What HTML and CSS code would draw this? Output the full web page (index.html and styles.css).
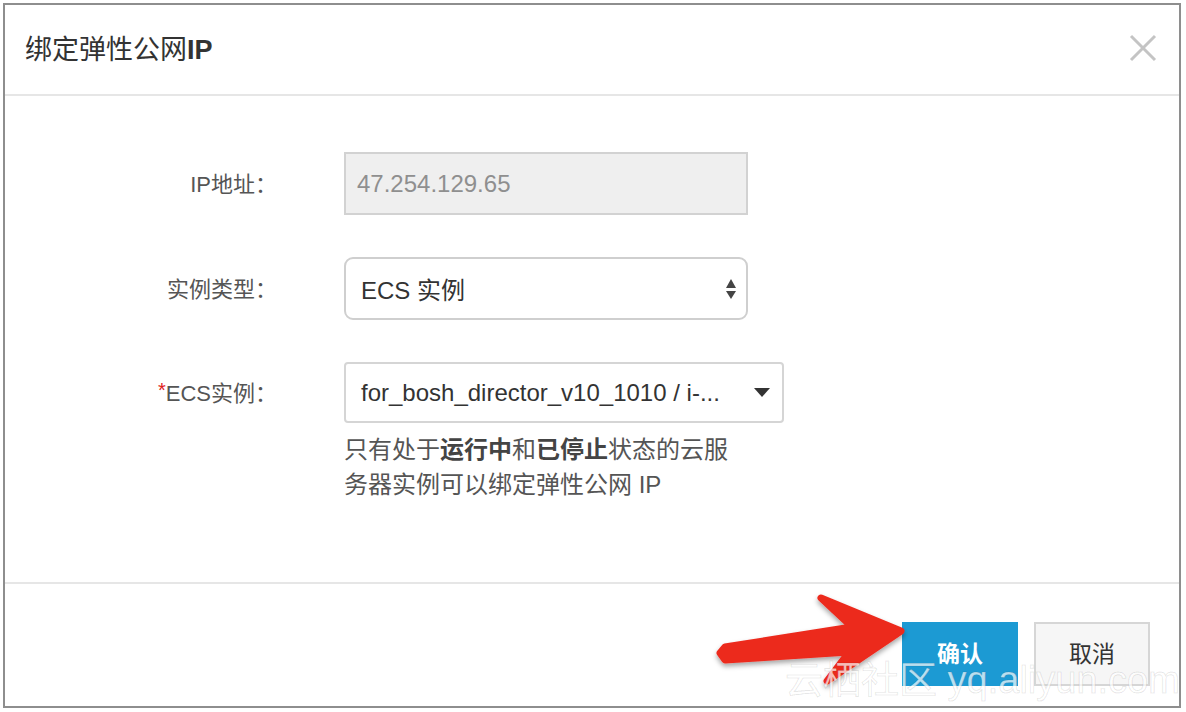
FILE: index.html
```html
<!DOCTYPE html>
<html lang="zh-CN">
<head>
<meta charset="utf-8">
<title>绑定弹性公网IP</title>
<link rel="stylesheet" href="styles.css">
</head>
<body>
<div class="page">
  <div class="dialog">
    <div class="dlg-header">
      <h1 class="dlg-title">绑定弹性公网<b>IP</b></h1>
      <button class="dlg-close" aria-label="关闭">
        <svg width="28" height="28" viewBox="0 0 28 28"><path d="M2 2 L26 26 M26 2 L2 26" stroke="#c4c4c4" stroke-width="3" fill="none"/></svg>
      </button>
    </div>
    <div class="dlg-body">
      <div class="form-row">
        <div class="form-label">IP地址：</div>
        <div class="form-ctrl">
          <div class="input input-disabled">47.254.129.65</div>
        </div>
      </div>
      <div class="form-row">
        <div class="form-label">实例类型：</div>
        <div class="form-ctrl">
          <div class="select select-native">
            <span>ECS 实例</span>
            <svg class="updown" width="12" height="22" viewBox="0 0 12 22"><path d="M6 1 L11 10 L1 10 Z M1 13 L11 13 L6 21 Z" fill="#444"/></svg>
          </div>
        </div>
      </div>
      <div class="form-row">
        <div class="form-label form-label-sm"><span class="req">*</span>ECS实例：</div>
        <div class="form-ctrl">
          <div class="select select-custom">
            <span>for_bosh_director_v10_1010 / i-...</span>
            <svg class="caret" width="16" height="9" viewBox="0 0 16 9"><path d="M0 0 L16 0 L8 9 Z" fill="#333"/></svg>
          </div>
          <p class="help">只有处于<b>运行中</b>和<b>已停止</b>状态的云服<br>务器实例可以绑定弹性公网 IP</p>
        </div>
      </div>
    </div>
    <div class="dlg-footer">
      <button class="btn btn-primary">确认</button>
      <button class="btn btn-default">取消</button>
      <svg class="arrow" width="220" height="110" viewBox="0 0 220 110">
        <defs>
          <filter id="sh" x="-20%" y="-20%" width="140%" height="160%">
            <feDropShadow dx="0" dy="3" stdDeviation="2.5" flood-color="#000" flood-opacity="0.35"/>
          </filter>
        </defs>
        <path d="M121 8 L201 41 L127 91 L149 62 L25 70 L20 63 L25 57 L152 37 Z" fill="#ec2a1f" stroke="#ec2a1f" stroke-width="7" stroke-linejoin="round" filter="url(#sh)"/>
      </svg>
      <div class="watermark">云栖社区 yq.aliyun.com</div>
    </div>
  </div>
</div>
</body>
</html>
```

FILE: styles.css
```css
html, body {
  margin: 0;
  padding: 0;
  background: #fff;
}
body {
  font-family: "Liberation Sans", "Noto Sans CJK SC", sans-serif;
  color: #333;
  width: 1186px;
  height: 712px;
  overflow: hidden;
}
.page {
  padding: 3px 0 0 3px;
}
.dialog {
  box-sizing: border-box;
  width: 1178px;
  height: 705px;
  border: 2px solid #8e8e8e;
  background: #fff;
  display: flex;
  flex-direction: column;
}
.dlg-header {
  height: 89px;
  border-bottom: 2px solid #e6e6e6;
  display: flex;
  align-items: center;
  justify-content: space-between;
  padding: 0 22px 0 20px;
}
.dlg-title {
  margin: 0;
  font-size: 27px;
  font-weight: normal;
  color: #333;
  padding-bottom: 4px;
}
.dlg-title b {
  font-weight: bold;
}
.dlg-close {
  border: 0;
  background: none;
  padding: 0;
  width: 28px;
  height: 28px;
  display: block;
  margin-bottom: 4px;
}
.dlg-close svg {
  display: block;
}
.dlg-body {
  height: 486px;
  box-sizing: border-box;
  padding-top: 56px;
  display: flex;
  flex-direction: column;
  gap: 42px;
}
.form-row {
  display: flex;
  align-items: flex-start;
}
.form-label {
  width: 272px;
  height: 63px;
  margin-right: 67px;
  padding-bottom: 4px;
  box-sizing: border-box;
  display: flex;
  align-items: center;
  justify-content: flex-end;
  font-size: 22px;
  color: #555;
}
.form-label-sm {
  height: 61px;
}
.req {
  color: #e0201b;
  font-size: 20px;
}
.form-ctrl {
  display: flex;
  flex-direction: column;
}
.input, .select {
  box-sizing: border-box;
  font-size: 24px;
  display: flex;
  align-items: center;
}
.input-disabled {
  width: 404px;
  height: 63px;
  background: #efefef;
  border: 2px solid #d2d2d2;
  color: #8f8f8f;
  padding-left: 11px;
}
.select-native {
  width: 404px;
  height: 63px;
  border: 2px solid #cfcfcf;
  border-radius: 9px;
  color: #333;
  padding: 0 9px 0 15px;
  justify-content: space-between;
}
.select-custom {
  width: 440px;
  height: 61px;
  border: 2px solid #d5d5d5;
  border-radius: 4px;
  color: #333;
  padding: 0 12px 0 15px;
  justify-content: space-between;
}
.select svg {
  display: block;
  flex: none;
}
.help {
  margin: 9px 0 0;
  font-size: 24px;
  line-height: 35px;
  color: #555;
}
.help b {
  font-weight: bold;
  color: #444;
}
.dlg-footer {
  flex: 1;
  position: relative;
  border-top: 2px solid #e6e6e6;
  display: flex;
  justify-content: flex-end;
  align-items: flex-start;
  gap: 16px;
  padding: 38px 29px 0 0;
}
.btn {
  box-sizing: border-box;
  width: 116px;
  height: 64px;
  font-family: inherit;
  font-size: 23px;
  padding: 0 0 4px;
}
.btn-primary {
  background: #1c9ad3;
  border: 0;
  color: #fff;
  font-weight: bold;
}
.btn-default {
  background: #f6f6f6;
  border: 2px solid #d6d6d6;
  color: #333;
}
.arrow {
  position: absolute;
  left: 695px;
  top: 6px;
}
.watermark {
  position: absolute;
  left: 780px;
  top: 74px;
  font-size: 38px;
  line-height: 44px;
  white-space: nowrap;
  color: rgba(255, 255, 255, 0.7);
  -webkit-text-stroke: 1px rgba(0, 0, 0, 0.1);
  pointer-events: none;
}
```
